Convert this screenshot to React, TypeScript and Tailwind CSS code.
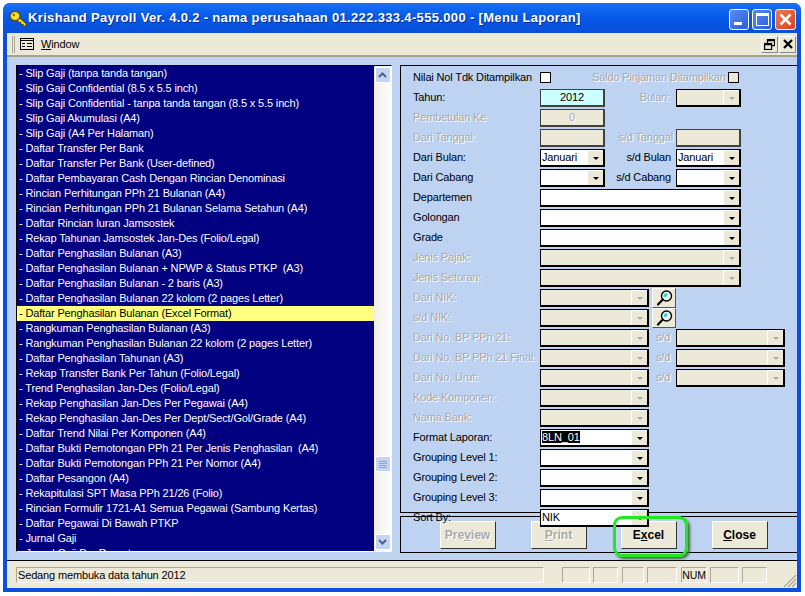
const reports = [
  'Slip Gaji (tanpa tanda tangan)',
  'Slip Gaji Confidential (8.5 x 5.5 inch)',
  'Slip Gaji Confidential - tanpa tanda tangan (8.5 x 5.5 inch)',
  'Slip Gaji Akumulasi (A4)',
  'Slip Gaji (A4 Per Halaman)',
  'Daftar Transfer Per Bank',
  'Daftar Transfer Per Bank (User-defined)',
  'Daftar Pembayaran Cash Dengan Rincian Denominasi',
  'Rincian Perhitungan PPh 21 Bulanan (A4)',
  'Rincian Perhitungan PPh 21 Bulanan Selama Setahun (A4)',
  'Daftar Rincian Iuran Jamsostek',
  'Rekap Tahunan Jamsostek Jan-Des (Folio/Legal)',
  'Daftar Penghasilan Bulanan (A3)',
  'Daftar Penghasilan Bulanan + NPWP & Status PTKP  (A3)',
  'Daftar Penghasilan Bulanan - 2 baris (A3)',
  'Daftar Penghasilan Bulanan 22 kolom (2 pages Letter)',
  'Daftar Penghasilan Bulanan (Excel Format)',
  'Rangkuman Penghasilan Bulanan (A3)',
  'Rangkuman Penghasilan Bulanan 22 kolom (2 pages Letter)',
  'Daftar Penghasilan Tahunan (A3)',
  'Rekap Transfer Bank Per Tahun (Folio/Legal)',
  'Trend Penghasilan Jan-Des (Folio/Legal)',
  'Rekap Penghasilan Jan-Des Per Pegawai (A4)',
  'Rekap Penghasilan Jan-Des Per Dept/Sect/Gol/Grade (A4)',
  'Daftar Trend Nilai Per Komponen (A4)',
  'Daftar Bukti Pemotongan PPh 21 Per Jenis Penghasilan  (A4)',
  'Daftar Bukti Pemotongan PPh 21 Per Nomor (A4)',
  'Daftar Pesangon (A4)',
  'Rekapitulasi SPT Masa PPh 21/26 (Folio)',
  'Rincian Formulir 1721-A1 Semua Pegawai (Sambung Kertas)',
  'Daftar Pegawai Di Bawah PTKP',
  'Jurnal Gaji',
  'Jurnal Gaji Per Departemen',
];

function Label({ text, off, className = 'w-[127px]' }: { text: string; off?: boolean; className?: string }) {
  return (
    <div className={`${className} shrink-0 mb-[2px] whitespace-nowrap ${off ? 'text-[#a9a9a9] [text-shadow:1px_1px_0_#fff]' : 'text-black'}`}>
      {text}
    </div>
  );
}

function Combo({ w, off, value, selected }: { w: string; off?: boolean; value?: string; selected?: boolean }) {
  return (
    <div className={`${w} h-[18px] shrink-0 flex border border-black border-r-2 border-b-2 ${off ? 'bg-[#ece9d8]' : 'bg-white'}`}>
      <div className="flex-1 min-w-0 pl-[1px] leading-[15px] text-black overflow-hidden whitespace-nowrap">
        {selected ? <span className="bg-black text-white">{value}</span> : value}
      </div>
      <div className="w-[16px] shrink-0 bg-[#ece9d8] border-l border-t border-white flex items-center justify-center">
        <div className={`w-0 h-0 border-x-[3px] border-x-transparent border-t-[3px] ${off ? 'border-t-[#a9a9a9]' : 'border-t-black'}`} />
      </div>
    </div>
  );
}

function Field({ w, fill, off, children }: { w: string; fill: string; off?: boolean; children?: string }) {
  return (
    <div className={`${w} ${fill} h-[18px] shrink-0 border border-[#404040] border-b-2 border-r-2 text-center leading-[15px] ${off ? 'text-[#a9a9a9] [text-shadow:1px_1px_0_#fff]' : 'text-black'}`}>
      {children}
    </div>
  );
}

function Check({ off }: { off?: boolean }) {
  return <div className={`w-[11px] h-[11px] shrink-0 mb-[2px] border border-black ${off ? 'bg-[#ece9d8]' : 'bg-white'}`} />;
}

function Row({ children }: { children: React.ReactNode }) {
  return <div className="h-[20px] flex items-center">{children}</div>;
}

function SearchBtn() {
  return (
    <div className="ml-[3px] w-[24px] h-[20px] shrink-0 bg-[#ece9d8] border border-white border-r-[#555] border-b-[#555] flex items-center justify-center">
      <svg width="17" height="16" viewBox="0 0 17 16" fill="none">
        <circle cx="10.5" cy="6" r="5" fill="#f4f8f8" stroke="#000" strokeWidth="1.4" />
        <path d="M7.5 6.5 A3.4 3.4 0 0 1 11 3 L11.5 5 L9.5 7.5 Z" fill="#22d8e0" />
        <path d="M6.8 9.6 L2 14.5" stroke="#000" strokeWidth="2.2" strokeLinecap="round" />
      </svg>
    </div>
  );
}

function Btn({ text, under, off, className }: { text: string; under: number; off?: boolean; className: string }) {
  return (
    <div className={`${className} w-[56px] h-[28px] pr-[1px] bg-[#ece9d8] border border-white border-r-[#333] border-b-[#333] flex items-center justify-center font-bold text-[12px] tracking-normal ${off ? 'text-[#a9a9a9] [text-shadow:1px_1px_0_#fff]' : 'text-black'}`}>
      <span>
        {text.slice(0, under)}
        <span className="underline">{text[under]}</span>
        {text.slice(under + 1)}
      </span>
    </div>
  );
}

function StatusCell({ w, ml, children }: { w: string; ml: string; children?: string }) {
  return (
    <div className={`${w} ${ml} h-[16px] border border-[#aca899] border-r-white border-b-white leading-[15px] text-center text-black text-[10.5px]`}>
      {children}
    </div>
  );
}

function ScrollBtn({ up }: { up?: boolean }) {
  return (
    <div className="w-[16px] h-[16px] rounded-[2px] bg-[#c3d4f7] border border-white flex items-center justify-center mx-auto">
      <svg width="9" height="6" viewBox="0 0 9 6" fill="none" stroke="#4d6185" strokeWidth="2">
        <path d={up ? 'M1 5 L4.5 1.5 L8 5' : 'M1 1 L4.5 4.5 L8 1'} />
      </svg>
    </div>
  );
}

export default function App() {
  return (
    <div className="w-[805px] h-[596px] bg-white p-[3px] font-['Liberation_Sans',sans-serif] text-[11px] tracking-[-0.15px] overflow-hidden">
      <div className="w-[798px] h-[589px] rounded-t-[7px] bg-[#0a4fe0] flex flex-col">
        {/* Title bar */}
        <div className="h-[30px] shrink-0 rounded-t-[7px] bg-gradient-to-b from-[#1a70f5] via-[#0558e8] to-[#0a50d8] flex items-center pl-[6px] pr-[5px]">
          <svg width="18" height="17" viewBox="0 0 18 17" className="shrink-0">
            <path d="M8 8 L15.5 14.5" stroke="#5a4a08" strokeWidth="4.4" strokeLinecap="round" />
            <path d="M8 8 L15.5 14.5" stroke="#f7e02e" strokeWidth="2.4" strokeLinecap="round" />
            <path d="M12 12 L10 14 M14.5 14 L13 15.5" stroke="#5a4a08" strokeWidth="1.4" />
            <ellipse cx="6" cy="6" rx="5" ry="4.6" fill="#f7e02e" stroke="#5a4a08" strokeWidth="1.2" />
            <circle cx="4.8" cy="5" r="1.3" fill="#8a7412" />
          </svg>
          <div className="ml-[1px] font-bold text-[13px] tracking-[0.34px] text-white [text-shadow:1px_1px_0_#0a2a90] whitespace-nowrap">
            Krishand Payroll Ver. 4.0.2 - nama perusahaan 01.222.333.4-555.000 - [Menu Laporan]
          </div>
          <div className="ml-auto mt-[3px] flex gap-[3px]">
            <div className="w-[20px] h-[21px] rounded-[3px] border border-white bg-gradient-to-br from-[#5a8cf0] to-[#2a5cdc] flex items-end pl-[4px] pb-[4px]">
              <div className="w-[8px] h-[3px] bg-white" />
            </div>
            <div className="w-[20px] h-[21px] rounded-[3px] border border-white bg-gradient-to-br from-[#5a8cf0] to-[#2a5cdc] flex items-center justify-center">
              <div className="w-[13px] h-[13px] border border-white border-t-[3px]" />
            </div>
            <div className="w-[21px] h-[21px] rounded-[3px] border border-white bg-gradient-to-br from-[#ee7a50] to-[#d8401c] flex items-center justify-center">
              <svg width="13" height="13" viewBox="0 0 13 13" stroke="#fff" strokeWidth="2.6">
                <path d="M1.5 1.5 L11.5 11.5 M11.5 1.5 L1.5 11.5" />
              </svg>
            </div>
          </div>
        </div>
        {/* Menu bar */}
        <div className="mx-[4px] h-[24px] shrink-0 bg-[#ece9d8] border-b-2 border-[#a5a18c] flex items-center pl-[5px] pr-[1px]">
          <div className="w-[3px] h-[17px] border-x border-[#aca899]" />
          <svg width="14" height="12" viewBox="0 0 14 12" className="ml-[5px]" fill="none" stroke="#000">
            <rect x="0.5" y="0.5" width="13" height="11" />
            <path d="M0.5 2.5 H13.5 M2 5.5 H5 M7 5.5 H12 M2 8.5 H5 M7 8.5 H12" />
          </svg>
          <div className="ml-[7px] text-black">
            <span className="underline">W</span>indow
          </div>
          <div className="ml-auto flex gap-[1px]">
            <div className="w-[17px] h-[17px] border border-white border-r-[#888] border-b-[#888] flex items-center justify-center">
              <svg width="11" height="11" viewBox="0 0 11 11" fill="#ece9d8" stroke="#000" strokeWidth="1.2">
                <rect x="3.5" y="0.6" width="7" height="6" />
                <rect x="0.6" y="4.5" width="7" height="6" />
                <path d="M0.6 5.4 H7.6 M3.5 1.5 H10.5" strokeWidth="1.6" />
              </svg>
            </div>
            <div className="w-[17px] h-[17px] border border-white border-r-[#888] border-b-[#888] flex items-center justify-center">
              <svg width="10" height="10" viewBox="0 0 10 10" stroke="#000" strokeWidth="2.2">
                <path d="M1 1 L9 9 M9 1 L1 9" />
              </svg>
            </div>
          </div>
        </div>
        {/* Client area */}
        <div className="mx-[4px] h-[504px] shrink-0 bg-[#bed3f1] border-b border-black pt-[8px] pl-[9px] flex gap-[8px]">
          {/* Report list */}
          <div className="w-[376px] h-[487px] shrink-0 flex border border-black border-r-white border-b-white bg-[#000080] overflow-hidden">
            <div className="flex-1 min-w-0 overflow-hidden">
              {reports.map((r) => (
                <div
                  key={r}
                  className={`h-[15px] pl-[2px] leading-[15px] whitespace-pre ${r.includes('Excel') ? 'bg-[#ffff80] text-black' : 'text-white'}`}
                >
                  {'- ' + r}
                </div>
              ))}
            </div>
            <div className="w-[17px] shrink-0 bg-gradient-to-r from-[#f0eee5] to-[#fdfdfb] pt-[1px] pb-[1px] flex flex-col">
              <ScrollBtn up />
              <div className="h-[373px]" />
              <div className="w-[16px] h-[16px] rounded-[2px] bg-[#c3d4f7] border border-white mx-auto flex flex-col items-center justify-center gap-[1px]">
                <div className="w-[8px] h-[1px] bg-[#8aa2d8]" />
                <div className="w-[8px] h-[1px] bg-[#8aa2d8]" />
                <div className="w-[8px] h-[1px] bg-[#8aa2d8]" />
                <div className="w-[8px] h-[1px] bg-[#8aa2d8]" />
              </div>
              <div className="flex-1" />
              <ScrollBtn />
            </div>
          </div>
          {/* Filter form */}
          <div className="flex-1 min-w-0 flex flex-col">
            <div className="h-[448px] shrink-0 border-l border-t border-b border-black pl-[12px] pt-[2px]">
              <Row>
                <Label text="Nilai Nol Tdk Ditampilkan" />
                <Check />
                <div className="ml-[41px]"><Label off text="Saldo Pinjaman Ditampilkan" className="w-[136px]" /></div>
                <Check off />
              </Row>
              <Row>
                <Label text="Tahun:" />
                <Field w="w-[65px]" fill="bg-[#ccffff]">2012</Field>
                <Label off text="Bulan:" className="w-[71px] text-right pr-[6px]" />
                <Combo w="w-[65px]" off />
              </Row>
              <Row>
                <Label off text="Pembetulan Ke" />
                <Field w="w-[65px]" fill="bg-[#ece9d8]" off>0</Field>
              </Row>
              <Row>
                <Label off text="Dari Tanggal:" />
                <Field w="w-[65px]" fill="bg-[#ece9d8]" off />
                <Label off text="s/d Tanggal" className="w-[71px] text-right pr-[3px]" />
                <Field w="w-[65px]" fill="bg-[#ece9d8]" off />
              </Row>
              <Row>
                <Label text="Dari Bulan:" />
                <Combo w="w-[65px]" value="Januari" />
                <Label text="s/d Bulan" className="w-[71px] text-right pr-[5px]" />
                <Combo w="w-[65px]" value="Januari" />
              </Row>
              <Row>
                <Label text="Dari Cabang" />
                <Combo w="w-[65px]" />
                <Label text="s/d Cabang" className="w-[71px] text-right pr-[5px]" />
                <Combo w="w-[65px]" />
              </Row>
              <Row><Label text="Departemen" /><Combo w="w-[201px]" /></Row>
              <Row><Label text="Golongan" /><Combo w="w-[201px]" /></Row>
              <Row><Label text="Grade" /><Combo w="w-[201px]" /></Row>
              <Row><Label off text="Jenis Pajak:" /><Combo w="w-[201px]" off /></Row>
              <Row><Label off text="Jenis Setoran:" /><Combo w="w-[201px]" off /></Row>
              <Row><Label off text="Dari NIK:" /><Combo w="w-[109px]" off /><SearchBtn /></Row>
              <Row><Label off text="s/d NIK:" /><Combo w="w-[109px]" off /><SearchBtn /></Row>
              {['Dari No. BP PPh 21:', 'Dari No. BP PPh 21 Final:', 'Dari No. Urut:'].map((t) => (
                <Row key={t}>
                  <Label off text={t} />
                  <Combo w="w-[109px]" off />
                  <Label off text="s/d" className="w-[27px] pl-[7px]" />
                  <Combo w="w-[109px]" off />
                </Row>
              ))}
              <Row><Label off text="Kode Komponen:" /><Combo w="w-[109px]" off /></Row>
              <Row><Label off text="Nama Bank:" /><Combo w="w-[109px]" off /></Row>
              <Row><Label text="Format Laporan:" /><Combo w="w-[109px]" value="8LN_01" selected /></Row>
              <Row><Label text="Grouping Level 1:" /><Combo w="w-[109px]" /></Row>
              <Row><Label text="Grouping Level 2:" /><Combo w="w-[109px]" /></Row>
              <Row><Label text="Grouping Level 3:" /><Combo w="w-[109px]" /></Row>
              <div className="relative z-10">
                <Row>
                  <Label text="Sort By:" />
                  <Combo w="w-[109px]" value="NIK" />
                </Row>
              </div>
            </div>
            <div className="relative mt-[3px] h-[37px] shrink-0 border border-black border-r-0 flex items-center">
              <Btn text="Preview" under={3} off className="ml-[39px]" />
              <Btn text="Print" under={0} off className="ml-[35px]" />
              <Btn text="Excel" under={1} className="ml-[34px]" />
              <Btn text="Close" under={0} className="ml-[35px]" />
              <div className="absolute z-20 left-[212px] top-[-1px] w-[75px] h-[41px] rounded-[9px] border-[3px] border-[#22e822] [box-shadow:2px_2px_3px_#3a6a3a]" />
            </div>
          </div>
        </div>
        {/* Status bar */}
        <div className="mx-[4px] h-[27px] shrink-0 bg-[#ece9d8] flex items-center pl-[9px] relative">
          <div className="w-[528px] h-[16px] border border-[#aca899] border-r-white border-b-white pl-[1px] leading-[15px] text-black">
            Sedang membuka data tahun 2012
          </div>
          <StatusCell w="w-[28px]" ml="ml-[18px]" />
          <StatusCell w="w-[25px]" ml="ml-[3px]" />
          <StatusCell w="w-[22px]" ml="ml-[4px]" />
          <StatusCell w="w-[30px]" ml="ml-[3px]" />
          <StatusCell w="w-[26px]" ml="ml-[4px]">NUM</StatusCell>
          <StatusCell w="w-[29px]" ml="ml-[3px]" />
          <StatusCell w="w-[25px]" ml="ml-[3px]" />
          <svg width="15" height="15" viewBox="0 0 15 15" className="absolute right-0 bottom-0" stroke="#aca899" strokeWidth="1.2">
            <path d="M14 2 L2 14 M14 6 L6 14 M14 10 L10 14" />
          </svg>
        </div>
      </div>
    </div>
  );
}
